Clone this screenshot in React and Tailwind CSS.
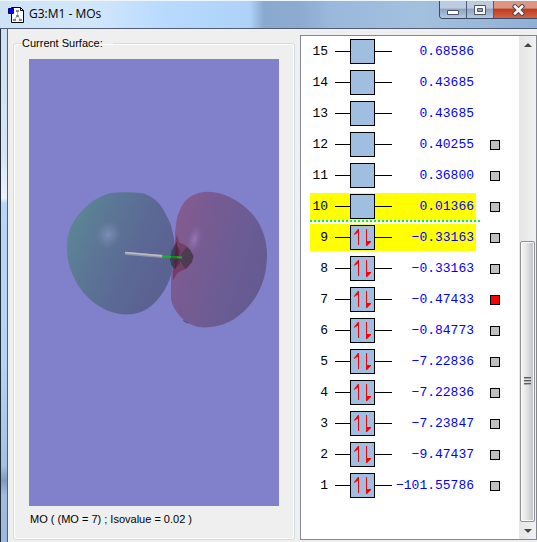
const orbitals = [
  { id: 15, energy: '0.68586' },
  { id: 14, energy: '0.43685' },
  { id: 13, energy: '0.43685' },
  { id: 12, energy: '0.40255', surface: true },
  { id: 11, energy: '0.36800', surface: true },
  { id: 10, energy: '0.01366', surface: true, frontier: true, lumo: true },
  { id: 9, energy: '−0.33163', surface: true, frontier: true, filled: true },
  { id: 8, energy: '−0.33163', surface: true, filled: true },
  { id: 7, energy: '−0.47433', surface: true, filled: true, selected: true },
  { id: 6, energy: '−0.84773', surface: true, filled: true },
  { id: 5, energy: '−7.22836', surface: true, filled: true },
  { id: 4, energy: '−7.22836', surface: true, filled: true },
  { id: 3, energy: '−7.23847', surface: true, filled: true },
  { id: 2, energy: '−9.47437', surface: true, filled: true },
  { id: 1, energy: '−101.55786', surface: true, filled: true },
];

function AppIcon() {
  return (
    <svg viewBox="0 0 17 17" className="h-[17px] w-[17px]" aria-hidden="true">
      <path d="M3.500 1.500h9l3 3v12h-12z" fill="#fff" stroke="#000" />
      <path d="M12.500 1.500v3h3" fill="none" stroke="#000" />
      <path d="M9.500 6v4M9.500 9.500l-3 4M9.500 9.500l3 4" stroke="#b5b5b5" fill="none" />
      <path d="M8 4h3v2H8zM8 9h3v2H8zM5 13h3v2H5zM11 13h3v2h-3z" fill="#858585" />
      <path d="M.5 2.500h5v5h-5z" fill="#00f" stroke="#00007a" />
    </svg>
  );
}

function TitleBar() {
  return (
    <header className="flex h-[29px] shrink-0 items-start justify-between border-b border-[#525c73] border-t border-t-[#eef5fc] bg-[linear-gradient(90deg,#cfe3f7_0px,#d3e7fa_90px,#b8daff_165px,#aed1f7_250px,#8aa9cf_264px,#8dabd0_300px,#9ab8dc_330px,#a4c0df_420px,#8fb0d5_100%)] pl-2">
      <div className="flex items-center gap-1 pt-[4px]">
        <AppIcon />
        <h1 className="font-['Open_Sans','Noto_Sans',sans-serif] text-[12px] leading-[18px] text-black">G3:M1 - MOs</h1>
      </div>
      <div className="flex h-[18px] overflow-hidden rounded-bl-[4px] border-b border-l border-[#3c4962]">
        <button aria-label="Minimize" className="flex w-[27px] items-center justify-center border-r border-[#4d5d79] bg-linear-to-b from-[#bccbdf] from-40% via-[#8fa5c2] via-50% to-[#b4c8e0]">
          <svg viewBox="0 0 12 12" className="h-[12px] w-[12px]">
            <path d="M.5 6.500h11v4H.5z" fill="#fff" stroke="#4a5368" />
          </svg>
        </button>
        <button aria-label="Maximize" className="flex w-[27px] items-center justify-center border-r border-[#4d5d79] bg-linear-to-b from-[#bccbdf] from-40% via-[#8fa5c2] via-50% to-[#b4c8e0]">
          <svg viewBox="0 0 12 11" className="h-[11px] w-[12px]">
            <path d="M.5 1.500h11v9H.5z" fill="#fff" stroke="#4a5368" />
            <path d="M3.500 4.500h5v3h-5z" fill="#8fa5c2" stroke="#4a5368" />
          </svg>
        </button>
        <button aria-label="Close" className="flex w-[43px] items-center justify-start bg-linear-to-b from-[#dc9580] from-40% via-[#bf3c22] via-50% to-[#d2634a] pl-[18px]">
          <svg viewBox="0 0 13 12" className="h-[12px] w-[13px]">
            <path d="M3 2.500l7 7M10 2.500l-7 7" stroke="#454b5f" strokeWidth="4.500" strokeLinecap="square" />
            <path d="M3 2.500l7 7M10 2.500l-7 7" stroke="#fff" strokeWidth="2.500" strokeLinecap="square" />
          </svg>
        </button>
      </div>
    </header>
  );
}

function Surface() {
  return (
    <svg viewBox="-78 -363 750 1338" className="min-h-0 w-full flex-1 bg-[#8180cb]" role="img" aria-label="Molecular orbital surface">
      <defs>
        <linearGradient id="lobeA" x1="0" y1="0.150" x2="0.900" y2="0.600">
          <stop offset="0" stopColor="#5b8995" />
          <stop offset="0.350" stopColor="#5c7796" />
          <stop offset="0.700" stopColor="#5b6995" />
          <stop offset="1" stopColor="#5a6291" />
        </linearGradient>
        <linearGradient id="lobeB" x1="0" y1="0.100" x2="1" y2="0.550">
          <stop offset="0" stopColor="#875b8f" />
          <stop offset="0.350" stopColor="#775b92" />
          <stop offset="0.700" stopColor="#6b5c94" />
          <stop offset="1" stopColor="#645a91" />
        </linearGradient>
        <radialGradient id="shineA">
          <stop offset="0" stopColor="#8798c2" stopOpacity="0.750" />
          <stop offset="1" stopColor="#7888b0" stopOpacity="0" />
        </radialGradient>
        <radialGradient id="shineB">
          <stop offset="0" stopColor="#9b7bb8" stopOpacity="0.850" />
          <stop offset="1" stopColor="#8868a5" stopOpacity="0" />
        </radialGradient>
      </defs>
      <path d="M36 205C36 155 50 122 80 92C108 62 140 42 175 37C205 35 235 35 262 38C292 46 313 65 325 88C340 115 349 133 353 155C359 175 360 200 358 225C354 262 350 285 338 310C325 340 305 365 277 385C255 398 235 402 212 402C180 401 145 388 115 365C68 328 36 265 36 205Z" fill="url(#lobeA)" />
      <path d="M360 160C363 125 366 103 380 77C394 51 422 34 460 34C503 34 552 59 588 96C620 130 636 177 636 222C636 285 617 338 580 379C545 419 500 441 450 441C421 441 397 430 380 412C360 391 348 370 348 352L348 285L356 250Z" fill="url(#lobeB)" />
      <ellipse cx="159" cy="163" rx="38" ry="43" fill="url(#shineA)" transform="rotate(28 159 163)" />
      <ellipse cx="418" cy="177" rx="22" ry="47" fill="url(#shineB)" transform="rotate(14 418 177)" />
      <path d="M365 162L370 178L374 187L391 194L405 206L416 226L411 244L398 262L382 270L368 277L355 299L353 280L357 245L358 207Z" fill="#753e68" />
      <path d="M361 190L374 208V250L358 266L350 253L345 235L350 211Z" fill="#533152" />
      <path d="M345 235L352 211L359 200L356 265L349 253Z" fill="#34415f" />
      <path d="M395 199L406 210L415 228L410 245L391 266L374 239L380 218Z" fill="#4d3c51" />
      <path d="M365 181L370 230L362 266L357 246Z" fill="#59213f" />
      <path d="M385 420L399 428" stroke="#49406f" strokeWidth="3" />
      <path d="M210 218L322 228" stroke="#8d93b0" strokeWidth="9" />
      <path d="M210 216L322 226" stroke="#bcbdb9" strokeWidth="5" />
      <path d="M321 228L381 231" stroke="#19b32a" strokeWidth="6" />
      <path d="M348 230L366 231" stroke="#147c20" strokeWidth="6" />
    </svg>
  );
}

function SurfacePanel() {
  return (
    <fieldset className="flex min-w-0 flex-1 flex-col rounded-[3px] border border-[#d0dde6] px-[15px] pb-[12px] shadow-[inset_0_0_0_1px_#fff]">
      <legend className="-ml-[8px] px-[1px] pr-[10px] text-[11px] leading-[16px]">Current Surface:</legend>
      <div className="flex min-h-0 flex-1 flex-col pt-[8px]">
        <Surface />
        <p className="pt-[5px] pl-px text-[11px] leading-[16px]">MO ( (MO = 7) ; Isovalue = 0.02 )</p>
      </div>
    </fieldset>
  );
}

function Spins() {
  return (
    <svg viewBox="0 0 23 23" className="h-[23px] w-[23px]" aria-hidden="true">
      <path d="M7.500 19V3M15.500 3v16" stroke="#f00" fill="none" />
      <path d="M8 3v3L3 9V8l4-5zM15 20v-6l1 1h4v1l-4 4z" fill="#f00" />
    </svg>
  );
}

function OrbitalRow({ id, energy, surface, frontier, filled, lumo, selected }) {
  return (
    <li className="flex h-[31px] items-center">
      <label htmlFor={`mo-${id}`} className={`relative flex h-[27px] w-[166px] items-center ${frontier ? 'bg-[#ff0]' : ''}`}>
        <span className="w-[18px] text-right">{id}</span>
        <span className="ml-[7px] h-px w-[15px] bg-black" />
        <span className="h-[25px] w-[25px] border border-black bg-[#a0bedf]">{filled && <Spins />}</span>
        <span className="h-px w-[17px] bg-black" />
        <span className="flex flex-1 justify-end pr-[2px] text-[#00f]">{energy}</span>
        {lumo && <span className="absolute top-full left-0 h-[2px] w-[170px] bg-[repeating-linear-gradient(90deg,#0f0_0px,#0f0_2px,transparent_2px,transparent_4px)]" />}
      </label>
      {surface && (
        <input
          id={`mo-${id}`}
          type="checkbox"
          aria-label={`Show surface ${id}`}
          defaultChecked={selected}
          className="ml-[14px] h-[10px] w-[10px] appearance-none border border-black bg-[#c0c0c0] checked:bg-[#f00]"
        />
      )}
    </li>
  );
}

function ScrollBar() {
  return (
    <div className="flex w-[17px] shrink-0 flex-col bg-linear-to-r from-[#e5e5e5] to-[#f1f1f1]">
      <button aria-label="Scroll up" className="flex h-[17px] items-center justify-center">
        <svg viewBox="0 0 8 4" className="h-[4px] w-[8px]"><path d="M4 0l4 4H0z" fill="#444" /></svg>
      </button>
      <div className="flex flex-1 flex-col px-px">
        <div className="flex-[188]" />
        <div className="flex flex-[280] items-center justify-center rounded-[2px] border border-[#8f8f8f] bg-linear-to-r from-[#f6f6f6] via-[#e6e6e9] via-40% to-[#bfbfc4] shadow-[inset_0_0_0_1px_#fafafa]">
          <svg viewBox="0 0 7 9" className="h-[9px] w-[7px]" aria-hidden="true">
            <path d="M0 .5h7M0 3.500h7M0 6.500h7" stroke="#5b5b5b" />
            <path d="M0 1.500h7M0 4.500h7M0 7.500h7" stroke="#aaa" />
          </svg>
        </div>
      </div>
      <button aria-label="Scroll down" className="flex h-[17px] items-center justify-center">
        <svg viewBox="0 0 8 4" className="h-[4px] w-[8px]"><path d="M0 0h8L4 4z" fill="#444" /></svg>
      </button>
    </div>
  );
}

function OrbitalList() {
  return (
    <section className="flex w-[237px] shrink-0 border border-[#828790] bg-white">
      <ol className="flex-1 pl-[9px] font-['Liberation_Mono',monospace] text-[13px] leading-[16px]">
        {orbitals.map((o) => <OrbitalRow key={o.id} {...o} />)}
      </ol>
      <ScrollBar />
    </section>
  );
}

export default function App() {
  return (
    <div className="flex min-h-screen flex-col bg-[#efefef] font-['Liberation_Sans',Arial,sans-serif] text-black">
      <TitleBar />
      <div className="flex flex-1">
        <div className="w-[8px] shrink-0 border-r border-l border-r-[#525c73] border-l-[#252b39] bg-[linear-gradient(180deg,#cfe0f4_0%,#d6e6f8_25%,#eaf3fc_33%,#b6d7f9_34%,#b4d4f6_65%,#a3c1e4_85%,#7f9cc2_88%,#a0bce0_91%,#9bb9de_100%)]" />
        <main className="flex flex-1 gap-[5px] pt-[6px] pb-[2px] pl-[5px]">
          <SurfacePanel />
          <OrbitalList />
        </main>
      </div>
    </div>
  );
}
